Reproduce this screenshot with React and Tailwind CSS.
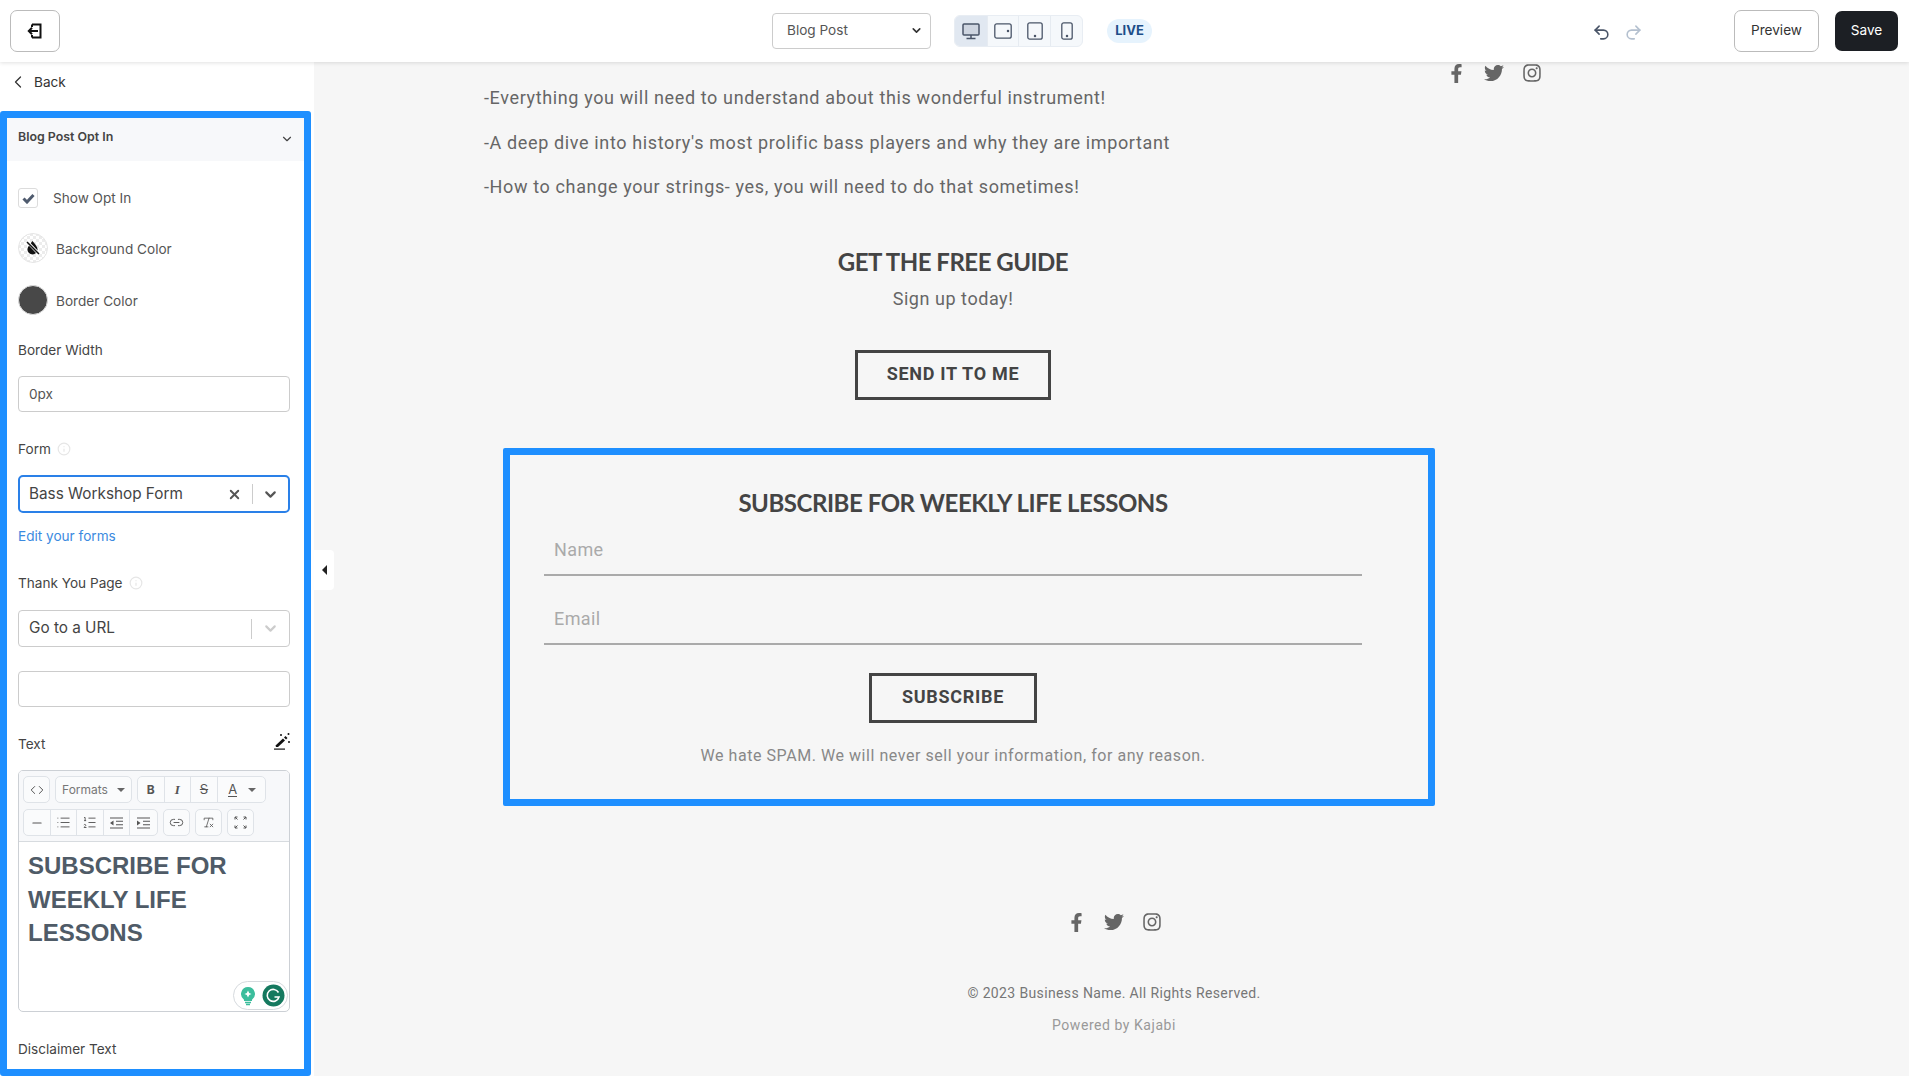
import { ChevronLeft, ChevronDown, X, Undo2, Redo2, Minus, List, ListOrdered, Link2, RemoveFormatting, Code, Info } from 'lucide-react'
import { FaFacebookF, FaTwitter, FaInstagram } from 'react-icons/fa'

const ui = "font-['Inter',sans-serif]"
const page = "font-['Roboto',sans-serif]"
const head = "font-['Lato',sans-serif]"

function ExitIcon() {
  return (
    <svg width="16" height="16" viewBox="0 0 16 16" fill="none" stroke="#111" strokeWidth="2">
      <path d="M5 1.500h8.500v13H5M5 4v-2.500M5 14.500V12" />
      <path d="M11 8H2M5 4.800 1.800 8 5 11.200" />
    </svg>
  )
}

function DeviceIcon({ kind }) {
  if (kind === 'desktop') {
    return (
      <svg width="18" height="17" viewBox="0 0 18 17" fill="none" stroke="#4a5568" strokeWidth="1.500">
        <rect x="1" y="1" width="16" height="11" rx="1" fill="#4a5568" fillOpacity=".12" />
        <path d="M9 12v3M4.500 15.500h9" />
      </svg>
    )
  }
  if (kind === 'wide') {
    return (
      <svg width="18" height="16" viewBox="0 0 18 16" fill="none" stroke="#4a5568" strokeWidth="1.300">
        <rect x=".8" y=".8" width="16.400" height="14.400" rx="2" />
        <circle cx="14" cy="8" r=".6" fill="#4a5568" />
      </svg>
    )
  }
  if (kind === 'tablet') {
    return (
      <svg width="16" height="18" viewBox="0 0 16 18" fill="none" stroke="#4a5568" strokeWidth="1.300">
        <rect x=".8" y=".8" width="14.400" height="16.400" rx="2" />
        <circle cx="8" cy="14" r=".6" fill="#4a5568" />
      </svg>
    )
  }
  return (
    <svg width="12" height="18" viewBox="0 0 12 18" fill="none" stroke="#4a5568" strokeWidth="1.300">
      <rect x=".8" y=".8" width="10.400" height="16.400" rx="2" />
      <circle cx="6" cy="14" r=".6" fill="#4a5568" />
    </svg>
  )
}

function NoColorIcon() {
  return (
    <svg width="30" height="30" viewBox="0 0 30 30">
      <defs>
        <pattern id="checker" width="6" height="6" patternUnits="userSpaceOnUse">
          <rect width="6" height="6" fill="#fff" />
          <rect width="3" height="3" fill="#ececec" />
          <rect x="3" y="3" width="3" height="3" fill="#ececec" />
        </pattern>
      </defs>
      <circle cx="15" cy="15" r="14.500" fill="url(#checker)" stroke="#e5e5e5" />
      <path d="M14.500 8c3 3.500 5 6 5 8.500a5 5 0 0 1-10 0c0-2.500 2-5 5-8.500z" fill="#111" />
      <path d="M9 8.500 21 21" stroke="#fff" strokeWidth="3" />
      <path d="M9 9 21 21" stroke="#111" strokeWidth="1.500" />
    </svg>
  )
}

function CheckMark() {
  return (
    <svg width="13" height="11" viewBox="0 0 13 11" fill="none" stroke="#4f5b6e" strokeWidth="3">
      <path d="M1.500 5.500 5 9l6.500-7" />
    </svg>
  )
}

function WandIcon() {
  return (
    <svg width="16" height="17" viewBox="0 0 16 17" fill="#111">
      <path d="M1.500 12.500 9 5.500l2 2-7 6.500H2z" />
      <path d="M10 4.500 11.500 3l2 2L12 6.500z" />
      <path d="M0 15.500h11v1.200H0z" />
      <circle cx="7" cy="2" r="1" />
      <circle cx="14.500" cy="1" r="1" />
      <circle cx="15" cy="9" r="1" />
    </svg>
  )
}

function ExpandIcon() {
  return (
    <svg width="13" height="13" viewBox="0 0 13 13" fill="none" stroke="#555" strokeWidth="1">
      <path d="M1 3.500V1h2.500M1 1l2.500 2.500M12 3.500V1H9.500M12 1 9.500 3.500M1 9.500V12h2.500M1 12l2.500-2.500M12 9.500V12H9.500M12 12 9.500 9.500" />
    </svg>
  )
}

function IndentIcon({ flip }) {
  return (
    <svg width="13" height="12" viewBox="0 0 13 12" fill="none" stroke="#555" strokeWidth="1.100">
      <path d="M0 1h13M6 4.300h7M6 7.700h7M0 11h13" />
      <path d={flip ? 'M0 3.500 3.500 6 0 8.500z' : 'M3.500 3.500 0 6l3.500 2.500z'} fill="#555" stroke="none" />
    </svg>
  )
}

function GrammarlyBadge() {
  return (
    <div className="absolute right-[1px] bottom-[1px] w-[55px] h-[29px] rounded-full bg-white border border-[#d5d9dd] flex items-center justify-between pl-[6px] pr-[2px]">
      <svg width="16" height="20" viewBox="0 0 16 20">
        <path d="M8 1a7 7 0 0 1 4 12.700V15H4v-1.300A7 7 0 0 1 8 1z" fill="#3bbd9c" />
        <path d="M8 4.500 9.200 7 11.500 8 9.200 9 8 11.500 6.800 9 4.500 8 6.800 7z" fill="#fff" />
        <path d="M5 16.500h6M6 18.500h4" stroke="#3bbd9c" strokeWidth="1.300" />
      </svg>
      <svg width="23" height="23" viewBox="0 0 23 23" fill="none">
        <circle cx="11.500" cy="11.500" r="11" fill="#15795f" />
        <path d="M16.500 8.500a6 6 0 1 0 .5 4.500h-4.500" stroke="#fff" strokeWidth="1.600" />
      </svg>
    </div>
  )
}

function ToolButton({ w = 'w-[26.600px]', children, className = '' }) {
  return <div className={`${w} h-full flex items-center justify-center text-[#555] ${className}`}>{children}</div>
}

function ToolGroup({ children }) {
  return (
    <div className="h-[27px] flex bg-[#fafbfc] border border-[#dfe3e8] rounded-[5px] divide-x divide-[#dfe3e8]">
      {children}
    </div>
  )
}

function Editor() {
  return (
    <div className="relative mt-[16px] h-[242px] border border-[#ccd0d5] rounded-[5px] overflow-hidden">
      <div className="h-[71px] bg-[#f7f8fa] border-b border-[#d7dbdf] pt-[5px] pl-[4px] flex flex-col gap-[6px]">
        <div className="flex gap-[5px]">
          <ToolGroup><ToolButton w="w-[25px]"><Code size={14} strokeWidth={1.700} /></ToolButton></ToolGroup>
          <ToolGroup>
            <ToolButton w="w-[75px]" className="gap-[9px] text-[12px] text-[#777]">
              Formats
              <span className="w-0 h-0 border-x-[4px] border-x-transparent border-t-[4px] border-t-[#666]" />
            </ToolButton>
          </ToolGroup>
          <ToolGroup>
            <ToolButton className="text-[12px] font-bold">B</ToolButton>
            <ToolButton className="text-[13px] font-bold italic font-['Liberation_Serif',serif]">I</ToolButton>
            <ToolButton className="text-[13px] line-through">S</ToolButton>
            <ToolButton w="w-[47px]" className="gap-[11px] pl-[2px]">
              <span className="text-[13px] leading-[14px] border-b-[1.500px] border-[#555]">A</span>
              <span className="w-0 h-0 border-x-[4px] border-x-transparent border-t-[4px] border-t-[#666]" />
            </ToolButton>
          </ToolGroup>
        </div>
        <div className="flex gap-[5px]">
          <ToolGroup>
            <ToolButton><Minus size={14} /></ToolButton>
            <ToolButton><List size={15} strokeWidth={1.500} /></ToolButton>
            <ToolButton><ListOrdered size={15} strokeWidth={1.500} /></ToolButton>
            <ToolButton><IndentIcon /></ToolButton>
            <ToolButton><IndentIcon flip /></ToolButton>
          </ToolGroup>
          <ToolGroup><ToolButton w="w-[25px]"><Link2 size={15} strokeWidth={1.500} /></ToolButton></ToolGroup>
          <ToolGroup><ToolButton w="w-[25px]"><RemoveFormatting size={13} strokeWidth={1.500} /></ToolButton></ToolGroup>
          <ToolGroup><ToolButton w="w-[25px]"><ExpandIcon /></ToolButton></ToolGroup>
        </div>
      </div>
      <div className="px-[9px] pt-[7px] font-['Liberation_Sans',sans-serif] font-bold text-[24px] leading-[33.500px] text-[#4f5b67]">
        SUBSCRIBE FOR<br />WEEKLY LIFE<br />LESSONS
      </div>
      <GrammarlyBadge />
    </div>
  )
}

function Field({ label, className = '', info }) {
  return (
    <div className={`h-[20px] flex items-center gap-[6px] text-[13.600px] text-[#444] ${className}`}>
      {label}
      {info && <Info size={14} className="text-[#e6e6e6]" />}
    </div>
  )
}

function Sidebar() {
  return (
    <aside className={`${ui} w-[314px] shrink-0 bg-white flex flex-col`}>
      <div className="h-[40px] mb-[9px] flex items-center pl-[8px] gap-[6px] text-[13.600px] text-[#333]">
        <ChevronLeft size={20} strokeWidth={1.500} />
        Back
      </div>
      <div className="w-[311px] h-[965px] border-[7px] border-[#1e8fff] rounded-[3px] overflow-hidden">
        <div className="h-[43px] pl-[11px] pr-[10px] pb-[4px] bg-[#f7f8fa] flex items-center justify-between text-[12.400px] font-semibold text-[#444]">
          Blog Post Opt In
          <ChevronDown size={14} className="mt-[3px]" />
        </div>
        <div className="pl-[11px] pr-[14px] flex flex-col">
          <div className="mt-[27px] h-[20px] flex items-center gap-[15px] text-[13.600px] text-[#555]">
            <div className="w-[20px] h-[20px] border border-[#dcdcdc] rounded-[3px] flex items-center justify-center">
              <CheckMark />
            </div>
            <span>Show Opt In</span>
          </div>
          <div className="mt-[25px] h-[30px] flex items-center gap-[8px] text-[13.600px] text-[#555]">
            <NoColorIcon />
            <span className="mt-[3px]">Background Color</span>
          </div>
          <div className="mt-[22px] h-[30px] flex items-center gap-[8px] text-[13.600px] text-[#555]">
            <div className="w-[30px] h-[30px] rounded-full bg-[#484848] border border-[#ddd]" />
            <span className="mt-[3px]">Border Color</span>
          </div>
          <Field label="Border Width" className="mt-[25px]" />
          <div className="mt-[16px] h-[36px] border border-[#ccc] rounded-[4px] flex items-center pl-[10px] text-[13.600px] text-[#555]">0px</div>
          <Field label="Form" info className="mt-[27px]" />
          <div className="mt-[16px] h-[38px] border-2 border-[#2a80e8] rounded-[5px] flex items-center pl-[9px] text-[15.300px] text-[#444]">
            <span className="flex-1">Bass Workshop Form</span>
            <X size={15} strokeWidth={3} className="text-[#555] mr-[10px]" />
            <span className="w-px h-[20px] bg-[#ccc]" />
            <ChevronDown size={17} strokeWidth={3} className="text-[#555] mx-[9px]" />
          </div>
          <div className="mt-[13px] h-[20px] flex items-center text-[13.600px] text-[#3b8ae0]">Edit your forms</div>
          <Field label="Thank You Page" info className="mt-[27px]" />
          <div className="mt-[17px] h-[37px] border border-[#ccc] rounded-[4px] flex items-center pl-[10px] text-[15.300px] text-[#444]">
            <span className="flex-1">Go to a URL</span>
            <span className="w-px h-[20px] bg-[#ccc]" />
            <ChevronDown size={17} strokeWidth={3} className="text-[#ccc] mx-[10px]" />
          </div>
          <div className="mt-[24px] h-[36px] border border-[#ccc] rounded-[4px]" />
          <div className="mt-[27px] h-[20px] flex items-center justify-between text-[13.600px] text-[#444]">
            Text
            <span className="-mt-[6px]"><WandIcon /></span>
          </div>
          <Editor />
          <Field label="Disclaimer Text" className="mt-[27px]" />
        </div>
      </div>
    </aside>
  )
}

function TopBar() {
  return (
    <header className={`${ui} relative z-10 h-[62px] shrink-0 bg-white shadow-[0_1px_4px_rgba(0,0,0,0.12)] flex items-center pl-[10px] pr-[11px]`}>
      <button className="w-[50px] h-[42px] border border-[#bbb] rounded-[7px] flex items-center justify-center">
        <ExitIcon />
      </button>
      <div className="ml-[712px] w-[159px] h-[36px] border border-[#ccc] rounded-[4px] flex items-center justify-between pl-[14px] pr-[7px] pb-[1px] text-[13.600px] text-[#555]">
        Blog Post
        <ChevronDown size={13} strokeWidth={3} className="text-[#333]" />
      </div>
      <div className="ml-[23px] h-[32px] flex border border-[#e8edf3] rounded-[6px] overflow-hidden bg-[#f5f8fb] divide-x divide-[#e6ebf1]">
        <div className="w-[33px] bg-[#e1e8f1] flex items-center justify-center"><DeviceIcon kind="desktop" /></div>
        <div className="w-[31px] flex items-center justify-center"><DeviceIcon kind="wide" /></div>
        <div className="w-[32px] flex items-center justify-center"><DeviceIcon kind="tablet" /></div>
        <div className="w-[31px] flex items-center justify-center"><DeviceIcon kind="phone" /></div>
      </div>
      <div className="ml-[24px] w-[45px] h-[24px] rounded-full bg-[#e6f3fd] flex items-center justify-center text-[13px] font-bold text-[#1d4e89]">LIVE</div>
      <Undo2 size={19} strokeWidth={2} className="ml-[440px] mt-[2px] text-[#4a5568]" />
      <Redo2 size={19} strokeWidth={2} className="ml-[13px] mt-[2px] text-[#b4c0cf]" />
      <button className="ml-[91px] w-[85px] h-[42px] border border-[#bbb] rounded-[7px] pb-[1px] text-[13.600px] text-[#333]">Preview</button>
      <button className="ml-[16px] w-[63px] h-[40px] bg-[#1c1f24] rounded-[7px] pb-[1px] text-[13.600px] text-white">Save</button>
    </header>
  )
}

function SocialIcons({ className = '' }) {
  return (
    <div className={`flex items-center gap-[18px] text-[#666] ${className}`}>
      <FaFacebookF size={19} />
      <FaTwitter size={20} />
      <FaInstagram size={20} />
    </div>
  )
}

function OutlineButton({ children, className = '' }) {
  return (
    <div className={`h-[50px] border-[3px] border-[#444] pb-[3px] flex items-center justify-center font-bold text-[18px] tracking-[0.7px] text-[#444] ${className}`}>
      {children}
    </div>
  )
}

function FormInput({ label, className = '' }) {
  return (
    <div className={`h-[46px] border-b-2 border-[#aaa] pl-[10px] text-[18px] leading-[40px] tracking-[0.4px] text-[#aaa] ${className}`}>
      {label}
    </div>
  )
}

function Preview() {
  return (
    <main className={`${page} flex-1 bg-[#f6f6f6] overflow-hidden`}>
      <div className="flex">
        <div className="w-[938px] ml-[170px] pt-[22px] shrink-0">
          <div className="text-[18px] leading-[27px] tracking-[0.63px] text-[#666] flex flex-col gap-[17.500px]">
            <p>-Everything you will need to understand about this wonderful instrument!</p>
            <p>-A deep dive into history's most prolific bass players and why they are important</p>
            <p>-How to change your strings- yes, you will need to do that sometimes!</p>
          </div>
          <h2 className={`${head} mt-[46px] h-[32px] leading-[32px] text-[24px] tracking-[-0.5px] font-bold text-center text-[#444]`}>GET THE FREE GUIDE</h2>
          <p className="mt-[7px] text-[18px] leading-[27px] tracking-[0.55px] text-center text-[#666]">Sign up today!</p>
          <OutlineButton className="mt-[38px] w-[196px] mx-auto">SEND IT TO ME</OutlineButton>

          <div className="mt-[48px] ml-[19px] w-[932px] h-[358px] border-[7px] border-[#1e8fff] rounded-[2px] pt-[32px] pl-[34px]">
            <div className="w-[818px]">
              <h2 className={`${head} h-[32px] leading-[32px] text-[24px] tracking-[-0.45px] font-bold text-center text-[#444]`}>SUBSCRIBE FOR WEEKLY LIFE LESSONS</h2>
              <FormInput label="Name" className="mt-[11px]" />
              <FormInput label="Email" className="mt-[23px]" />
              <OutlineButton className="mt-[28px] w-[168px] mx-auto">SUBSCRIBE</OutlineButton>
              <p className="mt-[21px] text-[16px] leading-[24px] tracking-[0.55px] text-center text-[#888]">We hate SPAM. We will never sell your information, for any reason.</p>
            </div>
          </div>
        </div>
        <SocialIcons className="ml-[25px] h-[22px]" />
      </div>
      <div className="mt-[104px] pl-[5px] flex flex-col items-center">
        <SocialIcons className="h-[24px]" />
        <p className="mt-[49px] h-[20px] leading-[20px] text-[14px] tracking-[0.37px] text-[#777]">© 2023 Business Name. All Rights Reserved.</p>
        <p className="mt-[12px] h-[20px] leading-[20px] text-[14px] tracking-[0.55px] text-[#999]">Powered by Kajabi</p>
      </div>
    </main>
  )
}

export default function App() {
  return (
    <div className="relative h-[1077px] overflow-hidden bg-white flex flex-col">
      <TopBar />
      <div className="h-[1014px] flex">
        <Sidebar />
        <Preview />
      </div>
      {/* collapse handle over the preview edge */}
      <div className="absolute left-[314px] top-[550px] w-[20px] h-[40px] bg-white rounded-r-[4px] flex items-center justify-center">
        <span className="w-0 h-0 border-y-[5px] border-y-transparent border-r-[5px] border-r-[#222]" />
      </div>
    </div>
  )
}
